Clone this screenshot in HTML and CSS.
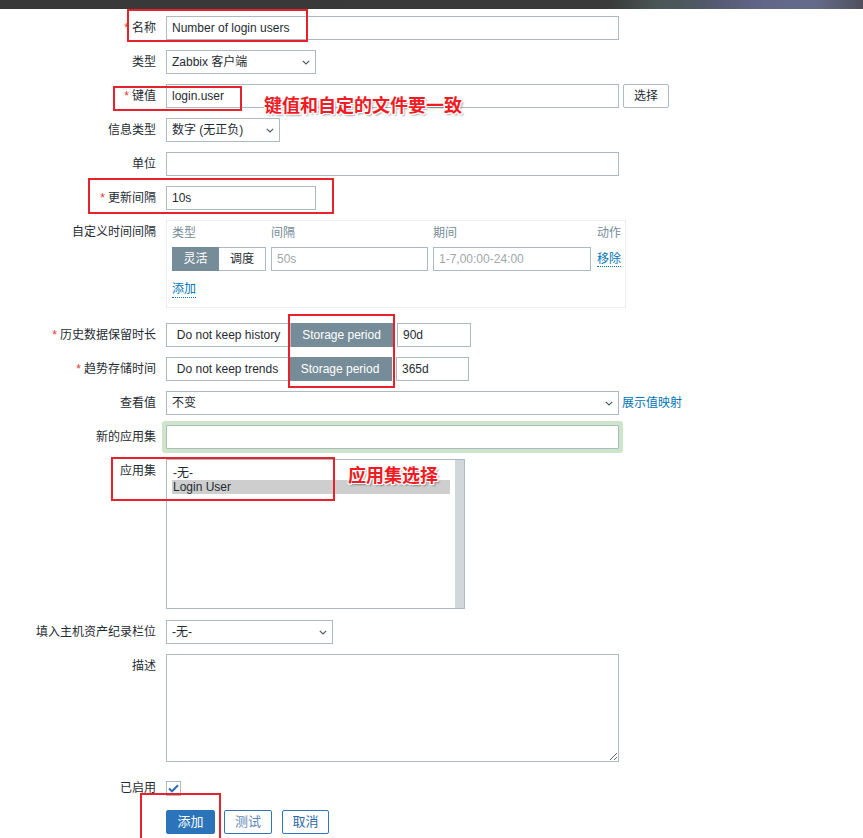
FILE: index.html
```html
<!DOCTYPE html>
<html lang="zh-CN">
  <head>
    <meta charset="UTF-8" />
    <meta name="viewport" content="width=device-width, initial-scale=1.0" />
    <title>监控项</title>
    <link rel="stylesheet" href="styles.css">
  </head>
  <body>
    <div class="page">
      <div class="topbar"></div>

      <form class="item-form">
        <div class="row">
          <label class="lbl req">名称</label>
          <div class="field">
            <input class="txt w-full" type="text" value="Number of login users">
          </div>
        </div>

        <div class="row">
          <label class="lbl">类型</label>
          <div class="field">
            <div class="select w-150">
              <span>Zabbix 客户端</span>
              <svg class="chev" width="8" height="5" viewBox="0 0 8 5"><path d="M0.8 0.8 L4 4 L7.2 0.8" /></svg>
            </div>
          </div>
        </div>

        <div class="row">
          <label class="lbl req">键值</label>
          <div class="field">
            <input class="txt w-full" type="text" value="login.user">
            <button class="btn-grey" type="button">选择</button>
          </div>
        </div>

        <div class="row">
          <label class="lbl">信息类型</label>
          <div class="field">
            <div class="select w-114">
              <span>数字 (无正负)</span>
              <svg class="chev" width="8" height="5" viewBox="0 0 8 5"><path d="M0.8 0.8 L4 4 L7.2 0.8" /></svg>
            </div>
          </div>
        </div>

        <div class="row">
          <label class="lbl">单位</label>
          <div class="field">
            <input class="txt w-full" type="text" value="">
          </div>
        </div>

        <div class="row">
          <label class="lbl req">更新间隔</label>
          <div class="field">
            <input class="txt w-150" type="text" value="10s">
          </div>
        </div>

        <div class="row">
          <label class="lbl">自定义时间间隔</label>
          <div class="field">
            <div class="interval-box">
              <div class="iv-grid">
                <span class="iv-head">类型</span>
                <span class="iv-head">间隔</span>
                <span class="iv-head">期间</span>
                <span class="iv-head">动作</span>
                <div class="seg">
                  <span class="seg-btn on w-47">灵活</span>
                  <span class="seg-btn w-47">调度</span>
                </div>
                <input class="txt" type="text" placeholder="50s">
                <input class="txt" type="text" placeholder="1-7,00:00-24:00">
                <span><a class="link dotted" href="#">移除</a></span>
              </div>
              <a class="link dotted add" href="#">添加</a>
            </div>
          </div>
        </div>

        <div class="row after-box">
          <label class="lbl req">历史数据保留时长</label>
          <div class="field">
            <div class="seg">
              <span class="seg-btn w-125">Do not keep history</span>
              <span class="seg-btn on w-102">Storage period</span>
            </div>
            <input class="txt w-74" type="text" value="90d">
          </div>
        </div>

        <div class="row">
          <label class="lbl req">趋势存储时间</label>
          <div class="field">
            <div class="seg">
              <span class="seg-btn w-123">Do not keep trends</span>
              <span class="seg-btn on w-103">Storage period</span>
            </div>
            <input class="txt w-73" type="text" value="365d">
          </div>
        </div>

        <div class="row">
          <label class="lbl">查看值</label>
          <div class="field">
            <div class="select w-full">
              <span>不变</span>
              <svg class="chev" width="8" height="5" viewBox="0 0 8 5"><path d="M0.8 0.8 L4 4 L7.2 0.8" /></svg>
            </div>
            <a class="link map-link" href="#">展示值映射</a>
          </div>
        </div>

        <div class="row">
          <label class="lbl">新的应用集</label>
          <div class="field">
            <input class="txt w-full focused" type="text" value="">
          </div>
        </div>

        <div class="row">
          <label class="lbl">应用集</label>
          <div class="field">
            <div class="listbox">
              <div class="opts">
                <div class="opt">-无-</div>
                <div class="opt sel">Login User</div>
              </div>
              <div class="scrollbar"></div>
            </div>
          </div>
        </div>

        <div class="row after-list">
          <label class="lbl">填入主机资产纪录栏位</label>
          <div class="field">
            <div class="select w-167">
              <span>-无-</span>
              <svg class="chev" width="8" height="5" viewBox="0 0 8 5"><path d="M0.8 0.8 L4 4 L7.2 0.8" /></svg>
            </div>
          </div>
        </div>

        <div class="row">
          <label class="lbl">描述</label>
          <div class="field">
            <textarea class="desc"></textarea>
          </div>
        </div>

        <div class="row after-desc">
          <label class="lbl">已启用</label>
          <div class="field center">
            <span class="check">
              <svg width="11" height="9" viewBox="0 0 11 9"><path d="M1 4.5 L4 7.3 L10 1.3" /></svg>
            </span>
          </div>
        </div>

        <div class="row">
          <span></span>
          <div class="field buttons">
            <button class="btn-main" type="button">添加</button>
            <button class="btn-alt light" type="button">测试</button>
            <button class="btn-alt" type="button">取消</button>
          </div>
        </div>
      </form>

      <!-- screenshot annotations -->
      <div class="mark m-name"></div>
      <div class="mark m-key"></div>
      <div class="mark m-delay"></div>
      <div class="mark m-storage"></div>
      <div class="mark m-apps"></div>
      <div class="mark m-add"></div>
      <div class="note n-key">键值和自定的文件要一致</div>
      <div class="note n-apps">应用集选择</div>
    </div>
  </body>
</html>
```

FILE: styles.css
```css
* {
  margin: 0;
  padding: 0;
  box-sizing: border-box;
}
body {
  font: 12px/14px "Liberation Sans", "Noto Sans CJK SC", sans-serif;
  color: #1f2c33;
  background: #fff;
}
.page {
  position: relative;
  width: 863px;
  height: 838px;
  overflow: hidden;
}
.topbar {
  height: 9px;
  background: linear-gradient(90deg, #393939 0, #3a3a3a 610px, #4a5755 655px, #4d5860 690px,
    #575c78 725px, #62678a 765px, #646b89 815px, #585b6e 845px, #4e505c 863px);
}

/* form layout */
.item-form {
  display: flex;
  flex-direction: column;
  gap: 10px;
  padding-top: 7px;
}
.row {
  display: grid;
  grid-template-columns: 156px 1fr;
  column-gap: 10px;
}
.after-box {
  margin-top: 5px;
}
.after-list {
  margin-top: 1px;
}
.after-desc {
  margin-top: 4px;
}
.lbl {
  text-align: right;
  line-height: 24px;
  white-space: nowrap;
}
.req::before {
  content: "*";
  color: #e33734;
  margin-right: 3px;
}
.field {
  display: flex;
  align-items: flex-start;
  gap: 4px;
}
.field.center {
  align-items: center;
  height: 24px;
}

/* inputs */
.txt {
  height: 24px;
  border: 1px solid #acbbc2;
  padding: 0 5px;
  font: inherit;
  color: #1f2c33;
  background: #fff;
  outline: none;
}
.txt::placeholder {
  color: #a0a7ab;
}
.w-full { width: 453px; }
.w-150 { width: 150px; }
.w-114 { width: 114px; }
.w-167 { width: 167px; }
.w-74 { width: 74px; }
.w-73 { width: 73px; }
.w-47 { width: 47px; }
.w-125 { width: 125px; }
.w-102 { width: 102px; }
.w-123 { width: 123px; }
.w-103 { width: 103px; }

.focused {
  box-shadow: 0 0 0 4px #cde5c8;
  border-radius: 1px;
}
.select {
  height: 24px;
  border: 1px solid #acbbc2;
  padding: 0 5px;
  display: flex;
  align-items: center;
  justify-content: space-between;
  background: #fff;
}
.chev {
  fill: none;
  stroke: #4f5b62;
  stroke-width: 1.2;
}
.btn-grey {
  height: 24px;
  width: 46px;
  border: 1px solid #acbbc2;
  border-radius: 2px;
  background: #fff;
  font: inherit;
  color: #1f2c33;
}

/* segmented toggles */
.seg {
  display: flex;
}
.seg-btn {
  height: 24px;
  line-height: 22px;
  border: 1px solid #acbbc2;
  text-align: center;
  background: #fff;
  white-space: nowrap;
}
.seg-btn + .seg-btn {
  border-left: 0;
}
.seg-btn.on {
  background: #768d99;
  border-color: #768d99;
  color: #fff;
}

/* custom intervals */
.interval-box {
  width: 460px;
  height: 88px;
  border: 1px solid #ebeef0;
  padding: 4px 5px 0;
}
.iv-grid {
  display: grid;
  grid-template-columns: 94px 157px 158px 1fr;
  column-gap: 5px;
  row-gap: 6px;
  align-items: center;
}
.iv-grid > * {
  white-space: nowrap;
}
.iv-head {
  line-height: 16px;
  color: #768d99;
}
.iv-grid .iv-head:nth-child(4),
.iv-grid > span:last-child {
  margin-left: 1px;
}
.link {
  color: #0275b8;
  text-decoration: none;
}
.dotted {
  border-bottom: 1px dotted #0275b8;
}
.add {
  display: inline-block;
  margin-top: 11px;
  line-height: 15px;
}
.map-link {
  margin-left: -1px;
  line-height: 24px;
}

/* listbox */
.listbox {
  width: 299px;
  height: 150px;
  border: 1px solid #acbbc2;
  display: flex;
  background: #fff;
}
.opts {
  flex: 1;
  padding: 6px 5px 0;
}
.opt {
  line-height: 14px;
  padding-left: 1px;
}
.opt.sel {
  background: #cecece;
}
.scrollbar {
  width: 9px;
  background: #d1d8db;
}

.desc {
  width: 453px;
  height: 108px;
  border: 1px solid #acbbc2;
  font: inherit;
  outline: none;
}

.check {
  width: 15px;
  height: 15px;
  border: 1px solid #acbbc2;
  display: flex;
  align-items: center;
  justify-content: center;
  margin-top: 1px;
}
.check path {
  fill: none;
  stroke: #2a6fb7;
  stroke-width: 2;
}

/* buttons */
.buttons {
  gap: 9px;
}
.btn-main,
.btn-alt {
  height: 24px;
  border-radius: 2px;
  font: inherit;
  font-size: 13px;
}
.btn-main {
  width: 49px;
  border: 1px solid #2b74ba;
  background: #2b74ba;
  color: #fff;
}
.btn-alt {
  width: 48px;
  border: 1px solid #2f78bd;
  background: #fff;
  color: #2d6aa6;
}
.btn-alt.light {
  color: #5f88b8;
}
.btn-alt + .btn-alt {
  margin-left: 1px;
  width: 47px;
}

/* red annotations drawn on top of the screenshot */
.mark {
  position: absolute;
  border: 2px solid #e8222b;
}
.m-name { left: 127px; top: 9px; width: 181px; height: 33px; }
.m-key { left: 113px; top: 86px; width: 129px; height: 25px; }
.m-delay { left: 88px; top: 178px; width: 246px; height: 36px; }
.m-storage { left: 288px; top: 314px; width: 107px; height: 74px; }
.m-apps { left: 111px; top: 457px; width: 224px; height: 44px; }
.m-add { left: 140px; top: 793px; width: 81px; height: 50px; }
.note {
  position: absolute;
  font: 700 18px/18px "Noto Sans CJK SC", sans-serif;
  color: #ee1c25;
  white-space: nowrap;
  text-shadow: 1px 0 0 #fff, -1px 0 0 #fff, 0 1px 0 #fff, 0 -1px 0 #fff,
    1px 1px 0 #fff, -1px -1px 0 #fff, 1px -1px 0 #fff, -1px 1px 0 #fff,
    2px 2px 2px rgba(0, 0, 0, 0.35);
}
.n-key { left: 264px; top: 95px; }
.n-apps { left: 348px; top: 465px; }
```
